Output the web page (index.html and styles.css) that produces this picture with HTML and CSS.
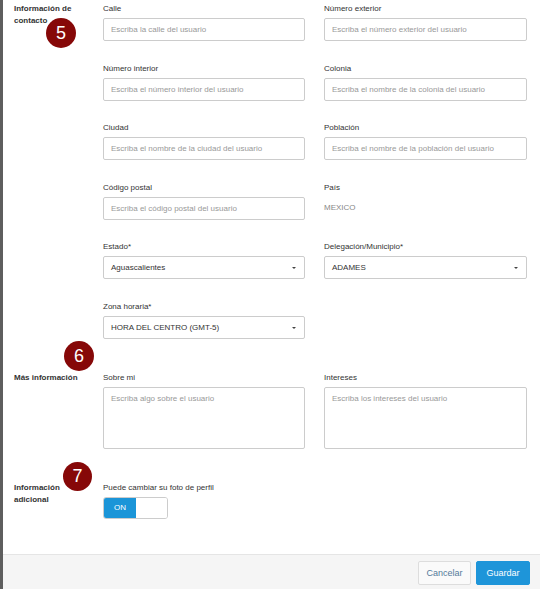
FILE: index.html
```html
<!DOCTYPE html>
<html lang="es">
<head>
<meta charset="utf-8">
<title>Usuario</title>
<link rel="stylesheet" href="styles.css">
</head>
<body>
<div class="modal">
  <div class="modal-body">
    <section class="sec">
      <div class="sec-label">Información de<br>contacto<span class="badge b5">5</span></div>
      <div class="grid">
        <div class="field"><label>Calle</label><input class="ctl" placeholder="Escriba la calle del usuario"></div>
        <div class="field"><label>Número exterior</label><input class="ctl" placeholder="Escriba el número exterior del usuario"></div>
        <div class="field"><label>Número interior</label><input class="ctl" placeholder="Escriba el número interior del usuario"></div>
        <div class="field"><label>Colonia</label><input class="ctl" placeholder="Escriba el nombre de la colonia del usuario"></div>
        <div class="field"><label>Ciudad</label><input class="ctl" placeholder="Escriba el nombre de la ciudad del usuario"></div>
        <div class="field"><label>Población</label><input class="ctl" placeholder="Escriba el nombre de la población del usuario"></div>
        <div class="field"><label>Código postal</label><input class="ctl" placeholder="Escriba el código postal del usuario"></div>
        <div class="field"><label>País</label><div class="static">MEXICO</div></div>
        <div class="field"><label>Estado*</label><div class="ctl select">Aguascalientes</div></div>
        <div class="field"><label>Delegación/Municipio*</label><div class="ctl select">ADAMES</div></div>
        <div class="field"><label>Zona horaria*</label><div class="ctl select">HORA DEL CENTRO (GMT-5)</div></div>
      </div>
    </section>
    <section class="sec gap">
      <div class="sec-label">Más información<span class="badge b6">6</span></div>
      <div class="grid">
        <div class="field"><label>Sobre mi</label><textarea class="ctl area" placeholder="Escriba algo sobre el usuario"></textarea></div>
        <div class="field"><label>Intereses</label><textarea class="ctl area" placeholder="Escriba los intereses del usuario"></textarea></div>
      </div>
    </section>
    <section class="sec gap">
      <div class="sec-label">Información<br>adicional<span class="badge b7">7</span></div>
      <div class="grid">
        <div class="field"><label>Puede cambiar su foto de perfil</label>
          <div class="switch"><span class="on">ON</span><span class="off"></span></div>
        </div>
      </div>
    </section>
  </div>
  <div class="modal-footer">
    <button class="btn btn-default">Cancelar</button>
    <button class="btn btn-primary">Guardar</button>
  </div>
</div>
</body>
</html>
```
FILE: styles.css
```css
* { box-sizing: border-box; }
html, body { margin: 0; padding: 0; background: #fff; }
body {
  font-family: "Liberation Sans", Arial, sans-serif;
  font-size: 8px;
  color: #333;
}
.modal {
  width: 540px;
  height: 589px;
  border-left: 3px solid #5e5e5e;
  display: flex;
  flex-direction: column;
}
.modal-body {
  flex: 1;
  padding: 3px 0 0 11px;
}
.sec { display: flex; }
.sec.gap { margin-top: 33px; }
.sec-label {
  position: relative;
  width: 89px;
  flex: none;
  font-weight: bold;
  line-height: 12px;
  color: #333;
}
.badge {
  position: absolute;
  width: 30px;
  height: 30px;
  border-radius: 50%;
  background: #860808;
  color: #fff;
  font-weight: normal;
  font-size: 18px;
  line-height: 30px;
  text-align: center;
}
.b5 { left: 32px; top: 15px; }
.b6 { left: 50px; top: -31px; }
.b7 { left: 49px; top: -20px; width: 29px; height: 29px; line-height: 29px; }
.grid {
  display: grid;
  grid-template-columns: 202px 203px;
  column-gap: 19px;
  row-gap: 21.5px;
}
.field label {
  display: block;
  height: 12px;
  line-height: 12px;
  margin-bottom: 3px;
}
.ctl {
  display: block;
  width: 100%;
  height: 23px;
  border: 1px solid #ccc;
  border-radius: 2px;
  padding: 0 7px;
  font-family: inherit;
  font-size: 8px;
  color: #333;
  background: #fff;
  line-height: 21px;
  margin: 0;
  outline: none;
}
.ctl::placeholder { color: #999; }
.select { position: relative; }
.select::after {
  content: "";
  position: absolute;
  right: 8px;
  top: 10px;
  border-left: 2px solid transparent;
  border-right: 2px solid transparent;
  border-top: 2px solid #444;
}
.area {
  height: 62px;
  resize: none;
  padding-top: 5px;
  line-height: 11px;
}
.static {
  height: 23px;
  line-height: 21px;
  color: #888;
}
.switch {
  display: flex;
  width: 65px;
  height: 22px;
  border: 1px solid #ccc;
  border-radius: 3px;
  overflow: hidden;
  margin-top: 1px;
}
.switch .on {
  width: 32px;
  background: #1b95d8;
  color: #fff;
  text-align: center;
  line-height: 20px;
}
.switch .off { flex: 1; background: #fff; }
.modal-footer {
  height: 35px;
  border-top: 1px solid #e5e5e5;
  background: #f5f5f5;
  display: flex;
  justify-content: flex-end;
  align-items: flex-start;
  gap: 5px;
  padding: 6px 10px 0 0;
}
.btn {
  height: 24px;
  border-radius: 2px;
  font-family: inherit;
  font-size: 9px;
  padding: 0;
  cursor: pointer;
}
.btn-default {
  width: 53px;
  background: #fafafa;
  border: 1px solid #ddd;
  color: #557a9a;
}
.btn-primary {
  width: 54px;
  background: #1e95d9;
  border: 1px solid #1e95d9;
  color: #fff;
}
```
